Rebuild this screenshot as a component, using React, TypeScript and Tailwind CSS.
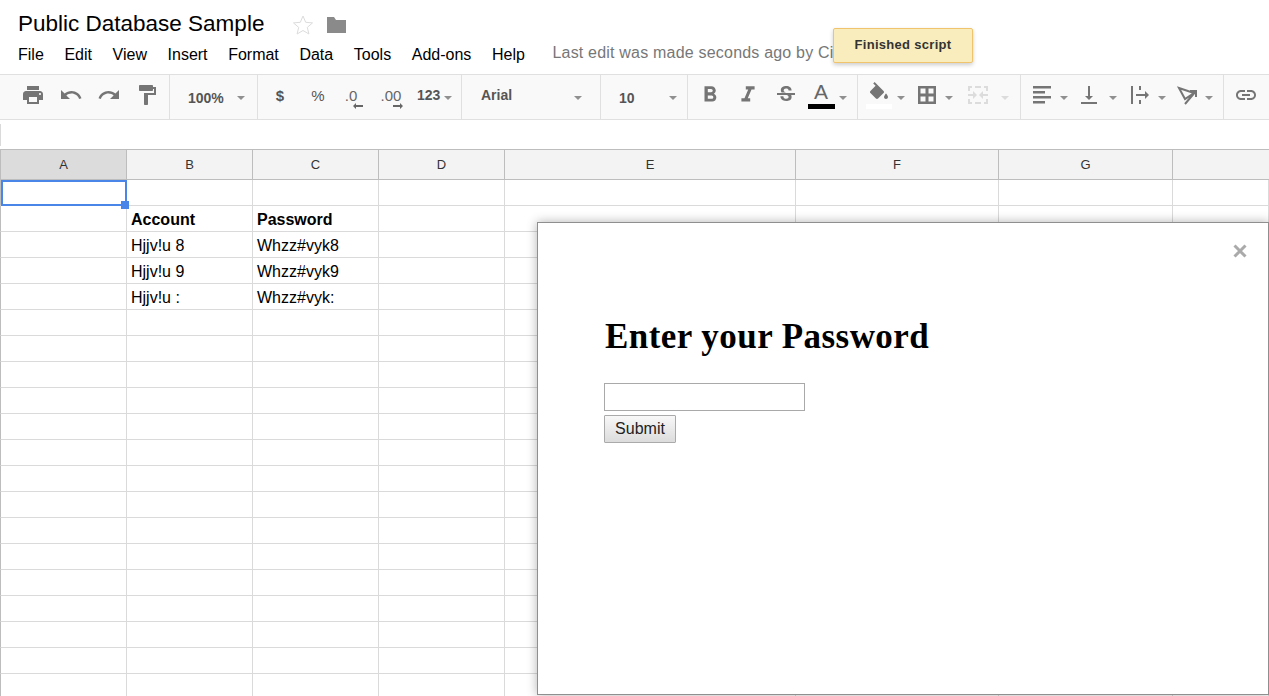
import type { ReactNode } from "react";

const MENU = ["File", "Edit", "View", "Insert", "Format", "Data", "Tools", "Add-ons", "Help"];
const COLUMNS = ["A", "B", "C", "D", "E", "F", "G", ""];
const ROWS: string[][] = [
  ["", "", ""],
  ["", "Account", "Password"],
  ["", "Hjjv!u 8", "Whzz#vyk8"],
  ["", "Hjjv!u 9", "Whzz#vyk9"],
  ["", "Hjjv!u :", "Whzz#vyk:"],
  ...Array.from({ length: 15 }, () => ["", "", ""]),
];

function Icon({ d, className = "" }: { d: string; className?: string }) {
  return (
    <svg viewBox="0 0 24 24" className={`size-6 fill-[#757575] ${className}`}>
      <path d={d} />
    </svg>
  );
}

function Caret({ light = false }: { light?: boolean }) {
  return (
    <span
      className={`block h-0 w-0 translate-y-[3px] border-x-[4px] border-t-[4px] border-x-transparent ${
        light ? "border-t-[#dcdcdc]" : "border-t-[#909090]"
      }`}
    />
  );
}

// One toolbar slot: fixed width so the icons sit where the sheet's do
function Slot({ w, children }: { w: string; children: ReactNode }) {
  return <div className={`flex shrink-0 items-center justify-center ${w}`}>{children}</div>;
}

function Group({ w, pl = "", children }: { w: string; pl?: string; children: ReactNode }) {
  return (
    <div className={`flex h-full shrink-0 items-center border-r border-[#e0e0e0] pb-[4px] ${w} ${pl}`}>
      {children}
    </div>
  );
}

function Toolbar() {
  return (
    <div className="flex h-[46px] items-center overflow-hidden border-y border-[#e0e0e0] bg-[#f9f9f9] text-[#555] font-bold">
      <Group w="w-[170px]" pl="pl-[14px]">
        <Slot w="w-[38px]">
          <Icon d="M19 8H5c-1.66 0-3 1.34-3 3v6h4v4h12v-4h4v-6c0-1.66-1.34-3-3-3zm-3 11H8v-5h8v5zm3-7c-.55 0-1-.45-1-1s.45-1 1-1 1 .45 1 1-.45 1-1 1zm-1-9H6v4h12V3z" />
        </Slot>
        <Slot w="w-[38px]">
          <Icon d="M12.5 8c-2.65 0-5.05.99-6.9 2.6L2 7v9h9l-3.62-3.62c1.39-1.16 3.16-1.88 5.12-1.88 3.54 0 6.55 2.31 7.6 5.5l2.37-.78C21.08 11.03 17.15 8 12.5 8z" />
        </Slot>
        <Slot w="w-[38px]">
          <Icon d="M18.4 10.6C16.55 8.99 14.15 8 11.5 8c-4.65 0-8.58 3.03-9.96 7.22L3.9 16c1.05-3.19 4.05-5.5 7.6-5.5 1.95 0 3.73.72 5.12 1.88L13 16h9V7l-3.6 3.6z" />
        </Slot>
        <Slot w="w-[38px]">
          <Icon d="M18 4V3c0-.55-.45-1-1-1H5c-.55 0-1 .45-1 1v4c0 .55.45 1 1 1h12c.55 0 1-.45 1-1V6h1v4H9v11c0 .55.45 1 1 1h2c.55 0 1-.45 1-1v-9h8V4h-3z" />
        </Slot>
      </Group>

      <Group w="w-[88px]" pl="pl-[18px]">
        <span className="mt-[5px] w-[49px] text-[14px] leading-none">100%</span>
        <Caret />
      </Group>

      <Group w="w-[204px]" pl="pl-[3px]">
        <Slot w="w-[38px]">
          <span className="mt-px text-[15px] leading-none">$</span>
        </Slot>
        <Slot w="w-[38px]">
          <span className="text-[15px] font-normal leading-none">%</span>
        </Slot>
        <Slot w="w-[28px]">
          <span className="relative text-[15px] font-normal leading-none text-[#666]">
            .0
            <svg viewBox="0 0 10 6" className="absolute -right-[6px] top-[15px] h-[6px] w-[10px] fill-[#666]">
              <path d="M0 3l3-3v2h7v2H3v2z" />
            </svg>
          </span>
        </Slot>
        <Slot w="w-[52px]">
          <span className="relative text-[15px] font-normal leading-none text-[#666]">
            .00
            <svg viewBox="0 0 10 6" className="absolute -right-[2px] top-[15px] h-[6px] w-[10px] fill-[#666]">
              <path d="M10 3L7 0v2H0v2h7v2z" />
            </svg>
          </span>
        </Slot>
        <div className="flex items-center gap-[4px]">
          <span className="-mt-[1px] text-[14px] leading-none">123</span>
          <Caret />
        </div>
      </Group>

      <Group w="w-[139px]" pl="pl-[19px]">
        <span className="w-[93px] text-[14px] leading-none -mt-[1px]">Arial</span>
        <Caret />
      </Group>

      <Group w="w-[87px]" pl="pl-[18px]">
        <span className="mt-[5px] w-[50px] text-[14px] leading-none">10</span>
        <Caret />
      </Group>

      <Group w="w-[170px]" pl="pl-[3px]">
        <Slot w="w-[38px]">
          <Icon
            className="scale-110"
            d="M15.6 10.79c.97-.67 1.65-1.77 1.65-2.79 0-2.26-1.75-4-4-4H7v14h7.04c2.09 0 3.71-1.7 3.71-3.79 0-1.52-.86-2.82-2.15-3.42zM10 6.5h3c.83 0 1.5.67 1.5 1.5s-.67 1.5-1.5 1.5h-3v-3zm3.5 9H10v-3h3.5c.83 0 1.5.67 1.5 1.5s-.67 1.5-1.5 1.5z"
          />
        </Slot>
        <Slot w="w-[38px]">
          <Icon className="scale-110" d="M10 4v3h2.21l-3.42 8H6v3h8v-3h-2.21l3.42-8H18V4z" />
        </Slot>
        <Slot w="w-[37px]">
          <Icon d="M6.85 7.08C6.85 4.37 9.45 3 12.24 3c1.64 0 3 .49 3.9 1.28.77.65 1.46 1.73 1.46 3.24h-3.01c0-.31-.05-.59-.15-.85-.29-.86-1.2-1.28-2.35-1.28-2.04 0-2.4 1.39-2.4 2.11 0 .48.25.88.73 1.2.37.24.76.46 1.36.7H7.59c-.44-.58-.74-1.24-.74-2.12zM21 12v-2H3v2h9.62c1.15.45 1.96.75 1.96 1.97 0 1-.81 1.67-2.28 1.67-1.54 0-2.93-.54-2.93-2.51H6.4c0 .55.08 1.13.24 1.58.81 2.29 3.22 3.3 5.67 3.3 2.35 0 5.3-.92 5.3-4.04 0-.3-.03-1.16-.46-2H21z" />
        </Slot>
        <div className="ml-[3px] flex w-[28px] flex-col items-center">
          <span className="text-[21px] font-normal leading-[22px] text-[#666]">A</span>
          <span className="mt-[1px] h-[5px] w-[27px] bg-black" />
        </div>
        <div className="pl-[4px]">
          <Caret />
        </div>
      </Group>

      <Group w="w-[163px]" pl="pl-[9px]">
        <div className="flex w-[24px] flex-col items-center">
          <Icon
            className="-mt-[3px] translate-y-[3px]"
            d="M16.56 8.94L7.62 0 6.21 1.41l2.38 2.38-5.15 5.15c-.59.59-.59 1.54 0 2.12l5.5 5.5c.29.29.68.44 1.06.44s.77-.15 1.06-.44l5.5-5.5c.59-.58.59-1.53 0-2.12zM19 11.5s-2 2.17-2 3.5c0 1.1.9 2 2 2s2-.9 2-2c0-1.33-2-3.5-2-3.5z"
          />
          <span className="mt-px h-[5px] w-[26px] bg-white" />
        </div>
        <div className="pl-[6px] pr-[10px]">
          <Caret />
        </div>
        <Icon d="M3 3v18h18V3H3zm7.5 15.5h-5v-5h5v5zm0-8h-5v-5h5v5zm8 8h-5v-5h5v5zm0-8h-5v-5h5v5z" />
        <div className="pl-[6px] pr-[13px]">
          <Caret />
        </div>
        <svg viewBox="0 0 24 24" className="size-6 fill-[#dcdcdc]">
          <path d="M2 3h4v2H4v3H2zM9 3h6v2H9zM18 3h4v5h-2V5h-2zM2 16h2v3h2v2H2zM9 19h6v2H9zM20 16h2v5h-4v-2h2zM2 11h5V8l4 4-4 4v-3H2zM22 11h-5V8l-4 4 4 4v-3h5z" />
        </svg>
        <div className="pl-[11px]">
          <Caret light />
        </div>
      </Group>

      <Group w="w-[203px]" pl="pl-[9px]">
        <Icon d="M3 3h18v2.5H3zM3 8h12v2.5H3zM3 13h18v2.5H3zM3 18h12v2.5H3z" />
        <div className="pl-[6px] pr-[9px]">
          <Caret />
        </div>
        <Icon d="M16 13h-3V3h-2v10H8l4 4 4-4zM4 19v2h16v-2H4z" />
        <div className="pl-[8px] pr-[10px]">
          <Caret />
        </div>
        <svg viewBox="0 0 24 24" className="size-6 fill-[#757575]">
          <path d="M4 3h2v18H4zM12 3h2v4h-2zM12 17h2v4h-2zM9 11h9V8l4 4-4 4v-3H9z" />
        </svg>
        <div className="pl-[7px] pr-[10px]">
          <Caret />
        </div>
        <svg viewBox="0 0 24 24" className="size-6 fill-none stroke-[#757575] stroke-2">
          <path d="M3 5l15 5-9 6zM9 21L20 8M20 14V8h-6" />
        </svg>
        <div className="pl-[5px]">
          <Caret />
        </div>
      </Group>

      <div className="flex pb-[4px] pl-[10px]">
        <Icon d="M3.9 12c0-1.71 1.39-3.1 3.1-3.1h4V7H7c-2.76 0-5 2.24-5 5s2.24 5 5 5h4v-1.9H7c-1.71 0-3.1-1.39-3.1-3.1zM8 13h8v-2H8v2zm9-6h-4v1.9h4c1.71 0 3.1 1.39 3.1 3.1s-1.39 3.1-3.1 3.1h-4V17h4c2.76 0 5-2.24 5-5s-2.24-5-5-5z" />
      </div>
    </div>
  );
}

function Sheet() {
  return (
    <div className="grid grid-cols-[127px_126px_126px_126px_291px_203px_174px_1fr] grid-rows-[31px] auto-rows-[26px]">
      {COLUMNS.map((col, i) => (
        <div
          key={col || "rest"}
          className={`flex items-center justify-center border-y border-r border-[#bdbdbd] text-[13px] text-[#333] ${
            i === 0 ? "border-l bg-[#dcdcdc]" : "bg-[#f3f3f3]"
          } ${i === 7 ? "border-r-0" : ""}`}
        >
          {col}
        </div>
      ))}
      {ROWS.map((row, r) =>
        COLUMNS.map((_, c) => (
          <div
            key={`${r}-${c}`}
            className={`relative flex items-center whitespace-nowrap border-b border-r border-[#dadada] pl-1 pt-[2px] text-[16px] text-black ${
              c === 0 ? "border-l border-l-[#bdbdbd]" : ""
            } ${r === 1 ? "font-bold" : ""} ${r === 0 && c === 0 ? "z-10" : ""}`}
          >
            {row[c] ?? ""}
            {r === 0 && c === 0 && (
              <>
                <span className="absolute -bottom-px -right-px left-0 top-0 border-2 border-[#4a86e8]" />
                <span className="absolute -bottom-[4px] -right-[3px] size-[8px] bg-[#4a86e8]" />
              </>
            )}
          </div>
        )),
      )}
    </div>
  );
}

export default function App() {
  return (
    <div className="relative h-[696px] w-full overflow-hidden bg-white font-['Liberation_Sans',Arial,sans-serif]">
      <div className="h-[74px] pl-[18px]">
        <div className="flex h-[45px] items-center pt-[4px]">
          <span className="text-[22.5px] leading-none text-black">Public Database Sample</span>
          <svg viewBox="0 0 24 24" className="ml-[27px] size-6 fill-none stroke-[#dcdcdc]">
            <path d="M12 3l2.7 6.3 6.8.6-5.2 4.5 1.6 6.6L12 17.5 6.1 21l1.6-6.6L2.5 9.9l6.8-.6z" />
          </svg>
          <svg viewBox="0 0 24 24" className="ml-[9px] size-6 fill-[#8a8a8a]">
            <path d="M10 4H3v16h19V7H12z" />
          </svg>
        </div>
        <div className="flex items-center gap-[20.6px] text-[16px] leading-5 text-black">
          {MENU.map((item) => (
            <span key={item}>{item}</span>
          ))}
          <span className="-mt-[4px] ml-[7px] tracking-[0.2px] text-[#777]">
            Last edit was made seconds ago by Ci
          </span>
        </div>
      </div>

      <Toolbar />

      <div className="flex h-[29px] items-center">
        <span className="h-[22px] w-px bg-[#dadada]" />
      </div>

      <Sheet />

      <div className="absolute left-[833px] top-[28px] flex h-[35px] w-[140px] items-center justify-center rounded-[2px] border border-[#f0c36d] bg-[#f9edbe] pb-[2px] text-[13px] font-bold tracking-[0.3px] text-[#333] shadow-[0_2px_4px_rgba(0,0,0,0.2)]">
        Finished script
      </div>

      <div className="absolute left-[537px] top-[222px] z-20 h-[473px] w-[732px] border border-[#8f8f8f] bg-white pl-[66px] pt-[96px] shadow-[0_0_10px_rgba(0,0,0,0.3)]">
        <svg viewBox="0 0 14 14" className="absolute right-[21px] top-[21px] size-[14px] stroke-[#aaa] stroke-[3px]">
          <path d="M1.5 1.5l11 11M12.5 1.5l-11 11" />
        </svg>
        <h2 className="pl-px font-['Liberation_Serif',Georgia,serif] text-[35px] font-bold leading-[36px] tracking-[0.45px] text-black">
          Enter your Password
        </h2>
        <input className="mt-[28px] block h-[28px] w-[201px] border border-[#a9a9a9] bg-white outline-none" />
        <button className="mt-[4px] block h-[28px] w-[72px] rounded-[1px] border border-[#aaa] bg-linear-to-b from-[#f8f8f8] to-[#dcdcdc] text-[16px] text-[#222]">
          Submit
        </button>
      </div>
    </div>
  );
}
